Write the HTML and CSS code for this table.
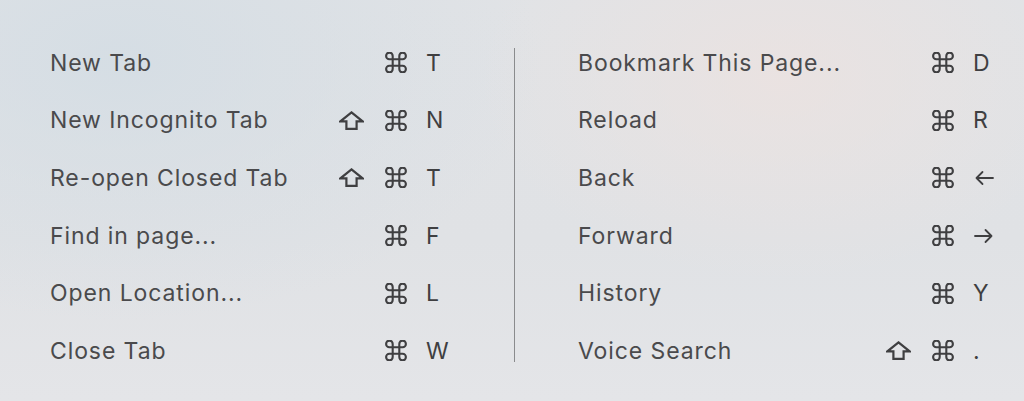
FILE: index.html
```html
<!DOCTYPE html>
<html>
<head>
<meta charset="utf-8">
<link rel="stylesheet" href="styles.css">
</head>
<body>
<main class="sheet">
  <section class="col col-left">
    <div class="row"><span class="label">New Tab</span><span class="k shift"></span><span class="k cmd"><svg viewBox="2 2.5 20 19"><path d="M15 6v12a3 3 0 1 0 3-3H6a3 3 0 1 0 3 3V6a3 3 0 1 0-3 3h12a3 3 0 1 0-3-3"/></svg></span><span class="k key">T</span></div>
    <div class="row"><span class="label">New Incognito Tab</span><span class="k shift"><svg viewBox="0 0 25 19"><path d="M12.5 1.4 L23.6 10.4 H17.6 V17.9 H7.4 V10.4 H1.4 Z"/></svg></span><span class="k cmd"><svg viewBox="2 2.5 20 19"><path d="M15 6v12a3 3 0 1 0 3-3H6a3 3 0 1 0 3 3V6a3 3 0 1 0-3 3h12a3 3 0 1 0-3-3"/></svg></span><span class="k key">N</span></div>
    <div class="row"><span class="label">Re-open Closed Tab</span><span class="k shift"><svg viewBox="0 0 25 19"><path d="M12.5 1.4 L23.6 10.4 H17.6 V17.9 H7.4 V10.4 H1.4 Z"/></svg></span><span class="k cmd"><svg viewBox="2 2.5 20 19"><path d="M15 6v12a3 3 0 1 0 3-3H6a3 3 0 1 0 3 3V6a3 3 0 1 0-3 3h12a3 3 0 1 0-3-3"/></svg></span><span class="k key">T</span></div>
    <div class="row"><span class="label">Find in page...</span><span class="k shift"></span><span class="k cmd"><svg viewBox="2 2.5 20 19"><path d="M15 6v12a3 3 0 1 0 3-3H6a3 3 0 1 0 3 3V6a3 3 0 1 0-3 3h12a3 3 0 1 0-3-3"/></svg></span><span class="k key">F</span></div>
    <div class="row"><span class="label">Open Location...</span><span class="k shift"></span><span class="k cmd"><svg viewBox="2 2.5 20 19"><path d="M15 6v12a3 3 0 1 0 3-3H6a3 3 0 1 0 3 3V6a3 3 0 1 0-3 3h12a3 3 0 1 0-3-3"/></svg></span><span class="k key">L</span></div>
    <div class="row"><span class="label">Close Tab</span><span class="k shift"></span><span class="k cmd"><svg viewBox="2 2.5 20 19"><path d="M15 6v12a3 3 0 1 0 3-3H6a3 3 0 1 0 3 3V6a3 3 0 1 0-3 3h12a3 3 0 1 0-3-3"/></svg></span><span class="k key">W</span></div>
  </section>
  <div class="divider"></div>
  <section class="col col-right">
    <div class="row"><span class="label">Bookmark This Page...</span><span class="k shift"></span><span class="k cmd"><svg viewBox="2 2.5 20 19"><path d="M15 6v12a3 3 0 1 0 3-3H6a3 3 0 1 0 3 3V6a3 3 0 1 0-3 3h12a3 3 0 1 0-3-3"/></svg></span><span class="k key">D</span></div>
    <div class="row"><span class="label">Reload</span><span class="k shift"></span><span class="k cmd"><svg viewBox="2 2.5 20 19"><path d="M15 6v12a3 3 0 1 0 3-3H6a3 3 0 1 0 3 3V6a3 3 0 1 0-3 3h12a3 3 0 1 0-3-3"/></svg></span><span class="k key">R</span></div>
    <div class="row"><span class="label">Back</span><span class="k shift"></span><span class="k cmd"><svg viewBox="2 2.5 20 19"><path d="M15 6v12a3 3 0 1 0 3-3H6a3 3 0 1 0 3 3V6a3 3 0 1 0-3 3h12a3 3 0 1 0-3-3"/></svg></span><span class="k key"><svg class="arrow" viewBox="0 0 20 16"><path d="M19 8 H2.5 M8.5 2 L2.5 8 L8.5 14"/></svg></span></div>
    <div class="row"><span class="label">Forward</span><span class="k shift"></span><span class="k cmd"><svg viewBox="2 2.5 20 19"><path d="M15 6v12a3 3 0 1 0 3-3H6a3 3 0 1 0 3 3V6a3 3 0 1 0-3 3h12a3 3 0 1 0-3-3"/></svg></span><span class="k key"><svg class="arrow" viewBox="0 0 20 16"><path d="M1 8 H17.5 M11.5 2 L17.5 8 L11.5 14"/></svg></span></div>
    <div class="row"><span class="label">History</span><span class="k shift"></span><span class="k cmd"><svg viewBox="2 2.5 20 19"><path d="M15 6v12a3 3 0 1 0 3-3H6a3 3 0 1 0 3 3V6a3 3 0 1 0-3 3h12a3 3 0 1 0-3-3"/></svg></span><span class="k key">Y</span></div>
    <div class="row"><span class="label">Voice Search</span><span class="k shift"><svg viewBox="0 0 25 19"><path d="M12.5 1.4 L23.6 10.4 H17.6 V17.9 H7.4 V10.4 H1.4 Z"/></svg></span><span class="k cmd"><svg viewBox="2 2.5 20 19"><path d="M15 6v12a3 3 0 1 0 3-3H6a3 3 0 1 0 3 3V6a3 3 0 1 0-3 3h12a3 3 0 1 0-3-3"/></svg></span><span class="k key">.</span></div>
  </section>
</main>
</body>
</html>
```

FILE: styles.css
```css
html, body {
  margin: 0;
  padding: 0;
  width: 1024px;
  height: 401px;
  overflow: hidden;
}
body {
  background:
    radial-gradient(ellipse 300px 200px at 780px 80px, rgba(236, 226, 224, 0.8), rgba(236, 226, 224, 0) 100%),
    radial-gradient(ellipse 420px 260px at 120px 60px, rgba(212, 221, 228, 0.9), rgba(212, 221, 228, 0) 100%),
    linear-gradient(180deg, #e1e3e6 0%, #e0e2e5 60%, #e4e5e8 100%);
  font-family: "Inter", "Liberation Sans", sans-serif;
  color: #4a4a4c;
}
.sheet {
  display: flex;
  padding: 34px 0 0 50px;
}
.col {
  display: flex;
  flex-direction: column;
}
.col-left { width: 400px; }
.col-right { width: 419px; }
.divider {
  width: 1px;
  background: #8a8b8d;
  margin: 14px 63px 0 64px;
  height: 314px;
}
.row {
  height: 57.6px;
  display: grid;
  grid-template-columns: 1fr 46px 42px 24px;
  align-items: center;
}
.label {
  font-size: 23px;
  letter-spacing: 0.9px;
}
.k {
  font-size: 23px;
  color: #3f3f41;
  display: flex;
  align-items: center;
}
.cmd svg {
  width: 22px;
  height: 21px;
  margin-left: 1px;
  fill: none;
  stroke: #3f3f41;
  stroke-width: 1.9;
  stroke-linecap: round;
  stroke-linejoin: round;
}
.shift svg {
  width: 25px;
  height: 19px;
  margin-left: 1px;
  fill: none;
  stroke: #3f3f41;
  stroke-width: 2.2;
  stroke-linejoin: miter;
}
.arrow {
  width: 20px;
  height: 16px;
  margin-left: 1px;
  fill: none;
  stroke: #3f3f41;
  stroke-width: 1.8;
  stroke-linecap: round;
  stroke-linejoin: round;
}
```
